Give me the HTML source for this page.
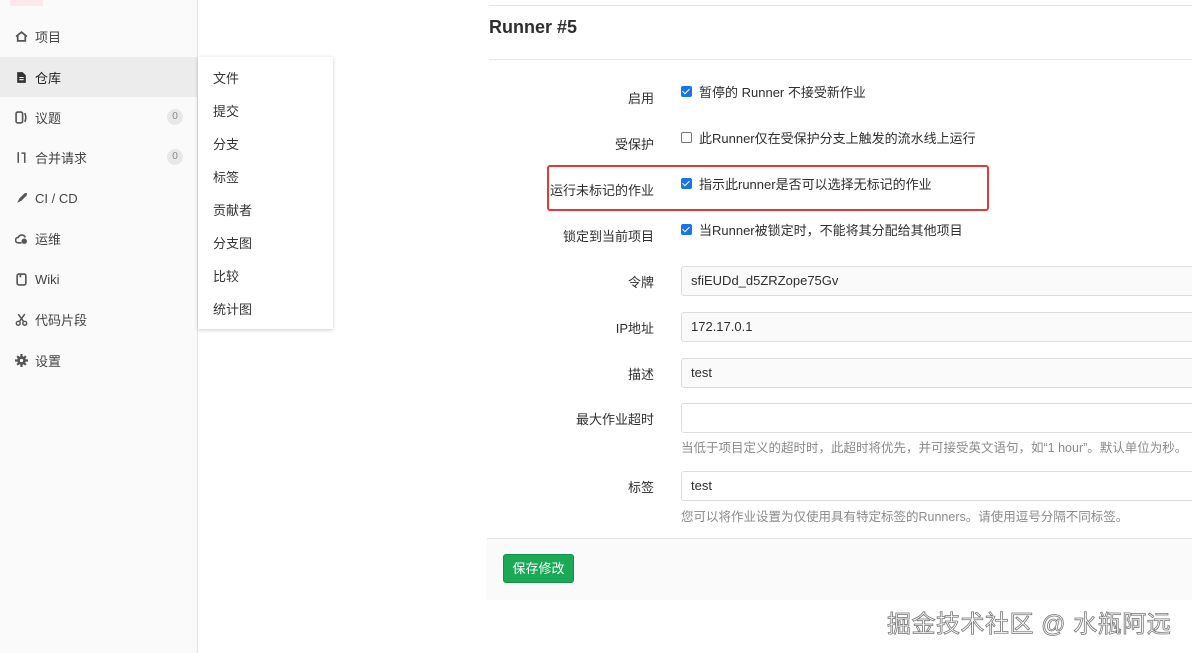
<!DOCTYPE html>
<html><head><meta charset="utf-8"><style>
*{box-sizing:border-box;margin:0;padding:0}
body{width:1192px;height:653px;background:#fff;font-family:"Liberation Sans","Noto Sans CJK SC",sans-serif;font-size:13px;color:#2e2e2e;position:relative;overflow:hidden}
.side{position:absolute;left:0;top:0;width:198px;height:653px;background:#fafafa;border-right:1px solid #e5e5e5}
.nav{position:absolute;left:0;width:197px;height:40px;display:flex;align-items:center;padding-left:15px;color:#444;font-size:13px}
.nav.act{background:#ececec;color:#222}
.nav svg{width:13px;height:13px;margin-right:7px}
.badge{position:absolute;right:14px;top:12px;width:16px;height:16px;border-radius:8px;background:#e8e8e8;color:#888;font-size:10px;text-align:center;line-height:16px}
.pop{position:absolute;left:198px;top:57px;width:135px;height:272px;background:#fff;box-shadow:0 1px 4px rgba(0,0,0,.2)}
.pop div{position:absolute;left:15px;font-size:13px;color:#333}
.hl{position:absolute;left:489px;right:0;height:1px;background:#e5e5e5}
.lab{position:absolute;right:538px;font-size:13px;color:#2e2e2e;text-align:right}
.cb{position:absolute;left:681px;width:11px;height:11px;border-radius:2px}
.cb.on{background:#1a73e8}
.cb.on:after{content:"";position:absolute;left:3px;top:1px;width:3px;height:6px;border:solid #fff;border-width:0 1.6px 1.6px 0;transform:rotate(45deg)}
.cb.off{border:1px solid #767676;background:#fff}
.ct{position:absolute;left:699px;font-size:13px;color:#2e2e2e}
.inp{position:absolute;left:681px;width:520px;height:30px;border:1px solid #ddd;border-radius:3px;background:#fafafa;padding-left:9px;line-height:28px;font-size:13px;color:#2e2e2e}
.help{position:absolute;left:681px;font-size:12.5px;color:#8a8a8a}
</style></head><body>
<div class="side">
<div style="position:absolute;left:10px;top:0;width:33px;height:6px;background:#fde8ec"></div>
<div class="nav" style="top:16px"><svg viewBox="0 0 12 12"><path d="M1 6L6 2l5 4M2.5 5v5h7V5" fill="none" stroke="#555" stroke-width="1.6"/></svg>项目</div>
<div class="nav act" style="top:57px"><svg viewBox="0 0 12 12"><path d="M2 1h5l3 3v7H2z" fill="#333"/><path d="M4 6h4M4 8h4" stroke="#fff"/></svg>仓库</div>
<div class="nav" style="top:97px"><svg viewBox="0 0 12 12"><rect x="1" y="1" width="6" height="10" rx="1.5" fill="none" stroke="#555" stroke-width="1.5"/><path d="M9 2q2 4 0 8" fill="none" stroke="#555" stroke-width="1.5"/></svg>议题<span class="badge">0</span></div>
<div class="nav" style="top:137px"><svg viewBox="0 0 12 12"><path d="M3 1v10M9 4v7M6 2h3v2" fill="none" stroke="#555" stroke-width="1.4"/></svg>合并请求<span class="badge">0</span></div>
<div class="nav" style="top:178px"><svg viewBox="0 0 12 12"><path d="M2 10l2-4 5-5 2 0 0 2-5 5z" fill="#555"/></svg>CI / CD</div>
<div class="nav" style="top:218px"><svg viewBox="0 0 12 12"><path d="M6 10H3a2.5 2.5 0 010-5 3.5 3.5 0 016.5 0" fill="none" stroke="#555" stroke-width="1.5"/><circle cx="8.5" cy="8.5" r="2.5" fill="#555"/></svg>运维</div>
<div class="nav" style="top:259px"><svg viewBox="0 0 12 12"><rect x="2" y="1" width="8" height="10" rx="1.5" fill="none" stroke="#555" stroke-width="1.5"/><path d="M5 1v3" stroke="#555" stroke-width="1.5"/></svg>Wiki</div>
<div class="nav" style="top:299px"><svg viewBox="0 0 12 12"><path d="M3 1l5 7M9 1L4 8" stroke="#555" stroke-width="1.4"/><circle cx="3" cy="9.5" r="1.8" fill="none" stroke="#555" stroke-width="1.3"/><circle cx="9" cy="9.5" r="1.8" fill="none" stroke="#555" stroke-width="1.3"/></svg>代码片段</div>
<div class="nav" style="top:340px"><svg viewBox="0 0 12 12"><circle cx="6" cy="6" r="4" fill="#555"/><path d="M6 0v12M0 6h12M2 2l8 8M10 2l-8 8" stroke="#555" stroke-width="2"/><circle cx="6" cy="6" r="1.5" fill="#fafafa"/></svg>设置</div>
</div>
<div class="pop">
<div style="top:11px">文件</div><div style="top:44px">提交</div><div style="top:77px">分支</div><div style="top:110px">标签</div><div style="top:143px">贡献者</div><div style="top:176px">分支图</div><div style="top:209px">比较</div><div style="top:242px">统计图</div>
</div>
<div class="hl" style="top:5px"></div>
<div style="position:absolute;left:489px;top:17px;font-size:18px;font-weight:bold;color:#2e2e2e">Runner #5</div>
<div class="hl" style="top:59px"></div>
<div class="lab" style="top:88px">启用</div>
<div class="cb on" style="top:86px"></div><div class="ct" style="top:82px">暂停的 Runner 不接受新作业</div>
<div class="lab" style="top:134px">受保护</div>
<div class="cb off" style="top:132px"></div><div class="ct" style="top:128px">此Runner仅在受保护分支上触发的流水线上运行</div>
<div style="position:absolute;left:547px;top:165px;width:442px;height:46px;border:2px solid #e53935;border-radius:3px"></div>
<div class="lab" style="top:180px">运行未标记的作业</div>
<div class="cb on" style="top:178px"></div><div class="ct" style="top:174px">指示此runner是否可以选择无标记的作业</div>
<div class="lab" style="top:226px">锁定到当前项目</div>
<div class="cb on" style="top:224px"></div><div class="ct" style="top:220px">当Runner被锁定时，不能将其分配给其他项目</div>
<div class="lab" style="top:272px">令牌</div><div class="inp" style="top:266px">sfiEUDd_d5ZRZope75Gv</div>
<div class="lab" style="top:318px">IP地址</div><div class="inp" style="top:312px">172.17.0.1</div>
<div class="lab" style="top:364px">描述</div><div class="inp" style="top:358px">test</div>
<div class="lab" style="top:409px">最大作业超时</div><div class="inp" style="top:403px;background:#fff"></div>
<div class="help" style="top:437px">当低于项目定义的超时时，此超时将优先，并可接受英文语句，如“1 hour”。默认单位为秒。</div>
<div class="lab" style="top:477px">标签</div><div class="inp" style="top:471px;background:#fff">test</div>
<div class="help" style="top:506px">您可以将作业设置为仅使用具有特定标签的Runners。请使用逗号分隔不同标签。</div>
<div style="position:absolute;left:487px;top:538px;right:0;height:62px;background:#fafafa;border-top:1px solid #e5e5e5"></div>
<div style="position:absolute;left:503px;top:554px;width:71px;height:29px;background:#1aaa55;border:1px solid #168f48;border-radius:3px;color:#fff;font-size:13px;text-align:center;line-height:27px">保存修改</div>
<div style="position:absolute;left:887px;top:604px;font-size:24px;color:#fff;-webkit-text-stroke:0.8px #777;letter-spacing:0.5px;white-space:nowrap">掘金技术社区 @ 水瓶阿远</div>
</body></html>
